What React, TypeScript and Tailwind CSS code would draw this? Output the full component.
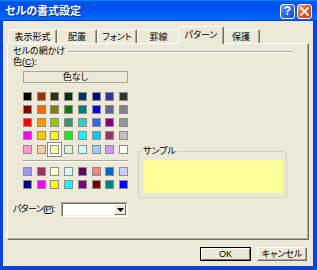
const palette = [
  ['#000000', '#993300', '#333300', '#003300', '#003366', '#000080', '#333399', '#333333'],
  ['#800000', '#FF6600', '#808000', '#008000', '#008080', '#0000FF', '#666699', '#808080'],
  ['#FF0000', '#FF9900', '#99CC00', '#339966', '#33CCCC', '#3366FF', '#800080', '#969696'],
  ['#FF00FF', '#FFCC00', '#FFFF00', '#00FF00', '#00FFFF', '#00CCFF', '#993366', '#C0C0C0'],
  ['#FF99CC', '#FFCC99', '#FFFF99', '#CCFFCC', '#CCFFFF', '#99CCFF', '#CC99FF', '#FFFFFF'],
];

const chartColors = [
  ['#9999FF', '#993366', '#FFFFCC', '#CCFFFF', '#660066', '#FF8080', '#0066CC', '#CCCCFF'],
  ['#000080', '#FF00FF', '#FFFF00', '#00FFFF', '#800080', '#800000', '#008080', '#0000FF'],
];

const tabs = [
  { label: '表示形式', w: 'w-[49px]' },
  { label: '配置', w: 'w-[40px]' },
  { label: 'フォント', w: 'w-[40px]' },
  { label: '罫線', w: 'w-[43px]' },
  { label: 'パターン', w: 'w-[46px]', active: true },
  { label: '保護', w: 'w-[38px]' },
];

function Swatch({ color, selected }: { color: string; selected?: boolean }) {
  return (
    <div className="relative w-[9px] h-[9px]">
      {selected && (
        <div className="absolute -inset-[3px] border border-[#8c8a80] bg-white" />
      )}
      <div
        className="relative w-[9px] h-[9px] border border-[#8d8d8d]"
        style={{ backgroundColor: color }}
      />
    </div>
  );
}

function ColorRows({ rows, gap, sel }: { rows: string[][]; gap: string; sel?: [number, number] }) {
  return (
    <div className={`flex flex-col ${gap}`}>
      {rows.map((row, r) => (
        <div key={r} className="flex justify-between w-[105px]">
          {row.map((c, i) => (
            <Swatch key={i} color={c} selected={!!sel && sel[0] === r && sel[1] === i} />
          ))}
        </div>
      ))}
    </div>
  );
}

function TitleBar() {
  return (
    <div className="h-[21px] shrink-0 flex items-center pl-[5px] pr-[5px] pt-[1px] bg-[linear-gradient(180deg,#0997ff,#0053ee_8%,#0050ee_40%,#0066ff_88%,#0066ff_93%,#005bff_95%,#003dd7_96%,#003dd7)]">
      <span className="flex-1 text-white font-bold text-[11px] leading-none [text-shadow:1px_1px_0_#0a2a8a]">
        セルの書式設定
      </span>
      <div className="flex gap-[2px]">
        <div className="w-[15px] h-[15px] rounded-[3px] border border-white bg-[linear-gradient(135deg,#7aa6fb_0%,#2d66f0_45%,#1a4ed6_100%)] flex items-center justify-center text-white font-bold text-[12px] leading-none">
          ?
        </div>
        <div className="w-[15px] h-[15px] rounded-[3px] border border-white bg-[linear-gradient(135deg,#f4a385_0%,#e4582f_45%,#c83c15_100%)] flex items-center justify-center">
          <svg width="9" height="9" viewBox="0 0 9 9">
            <path d="M1 1L8 8M8 1L1 8" stroke="#fff" strokeWidth="1.8" strokeLinecap="square" />
          </svg>
        </div>
      </div>
    </div>
  );
}

function Tabs() {
  return (
    <div className="flex items-end h-[17px] pl-[1px]">
      {tabs.map((t) =>
        t.active ? (
          <div
            key={t.label}
            className={`relative z-10 -mx-[2px] -mb-[1px] h-[18px] ${t.w} flex justify-center pt-[3px] leading-[11px] bg-[#ece9d8] border-t border-l border-r border-t-white border-l-white border-r-[#716f64] rounded-t-[2px] shadow-[inset_-1px_0_0_#aca899]`}
          >
            {t.label}
          </div>
        ) : (
          <div
            key={t.label}
            className={`h-[14px] ${t.w} flex justify-center pt-[2px] leading-[11px] border-t border-l border-r border-t-white border-l-white border-r-[#716f64] rounded-t-[2px] shadow-[inset_-1px_0_0_#aca899]`}
          >
            {t.label}
          </div>
        )
      )}
    </div>
  );
}

function Panel() {
  return (
    <div className="h-[197px] border border-t-white border-l-white border-r-[#716f64] border-b-[#716f64] shadow-[inset_-1px_-1px_0_#aca899] flex flex-col">
      <div className="mt-[2px] h-[11px] flex items-center pl-[5px] pr-[16px] leading-[11px]">
        <span>セルの網かけ</span>
        <div className="flex-1 ml-[3px] h-[2px] border-t border-b border-t-[#aca899] border-b-white" />
      </div>
      <div className="h-[11px] flex items-center pl-[5px] leading-[11px]">
        色(<span className="underline">C</span>):
      </div>
      <div className="flex items-start">
        <div className="pl-[15px] flex flex-col">
          <div className="mt-[3px] w-[105px] h-[12px] border border-[#a7a698] flex items-center justify-center leading-[10px]">
            色なし
          </div>
          <div className="mt-[8.5px]">
            <ColorRows rows={palette} gap="gap-[4.25px]" sel={[4, 2]} />
          </div>
          <div className="mt-[6px] w-[105px] h-[2px] border-t border-b border-t-[#aca899] border-b-white" />
          <div className="mt-[5px]">
            <ColorRows rows={chartColors} gap="gap-[4.5px]" />
          </div>
        </div>
        <fieldset className="ml-[10px] mt-[78px] w-[149px] border border-[#d0d0bf] rounded-[3px] pl-[5px] pr-[3px] pb-[4px]">
          <legend className="-ml-[2px] px-[1px] leading-[11px]">サンプル</legend>
          <div className="mt-[3px] h-[33px] bg-[#ffff99]" />
        </fieldset>
      </div>
      <div className="mt-[4px] h-[15px] flex items-center pl-[5px] leading-[11px]">
        <span className="w-[48px] tracking-[-0.7px]">
          パターン(<span className="underline">P</span>):
        </span>
        <div className="w-[67px] h-[15px] border border-t-[#aca899] border-l-[#aca899] border-r-white border-b-white">
          <div className="h-full flex justify-end bg-white border border-t-[#716f64] border-l-[#716f64] border-r-[#f1efe2] border-b-[#f1efe2]">
            <div className="w-[12px] h-full bg-[#ece9d8] flex items-center justify-center border border-t-white border-l-white border-r-[#716f64] border-b-[#716f64]">
              <svg width="7" height="4" viewBox="0 0 7 4">
                <path d="M0 0h7L3.5 4z" fill="#000" />
              </svg>
            </div>
          </div>
        </div>
      </div>
    </div>
  );
}

export default function App() {
  return (
    <div className="w-[317px] h-[270px] flex flex-col bg-[#0b44dc] text-black text-[9px] font-['Liberation_Sans','Noto_Sans_CJK_JP',sans-serif] [font-feature-settings:'palt']">
      <TitleBar />
      <div className="flex-1 ml-[3px] mr-[4px] mb-[4px] bg-[#ece9d8] flex flex-col px-[4px] pt-[5px]">
        <Tabs />
        <Panel />
        <div className="flex justify-end gap-[6px] mt-[7px] pr-[2px]">
          <button className="w-[51px] h-[14px] border border-black bg-[#ece9d8] shadow-[inset_1px_1px_0_#fff,inset_-1px_-1px_0_#716f64] leading-[10px]">
            OK
          </button>
          <button className="w-[50px] h-[14px] border border-t-white border-l-white border-r-[#716f64] border-b-[#716f64] bg-[#ece9d8] shadow-[inset_-1px_-1px_0_#aca899] leading-[10px]">
            キャンセル
          </button>
        </div>
      </div>
    </div>
  );
}
